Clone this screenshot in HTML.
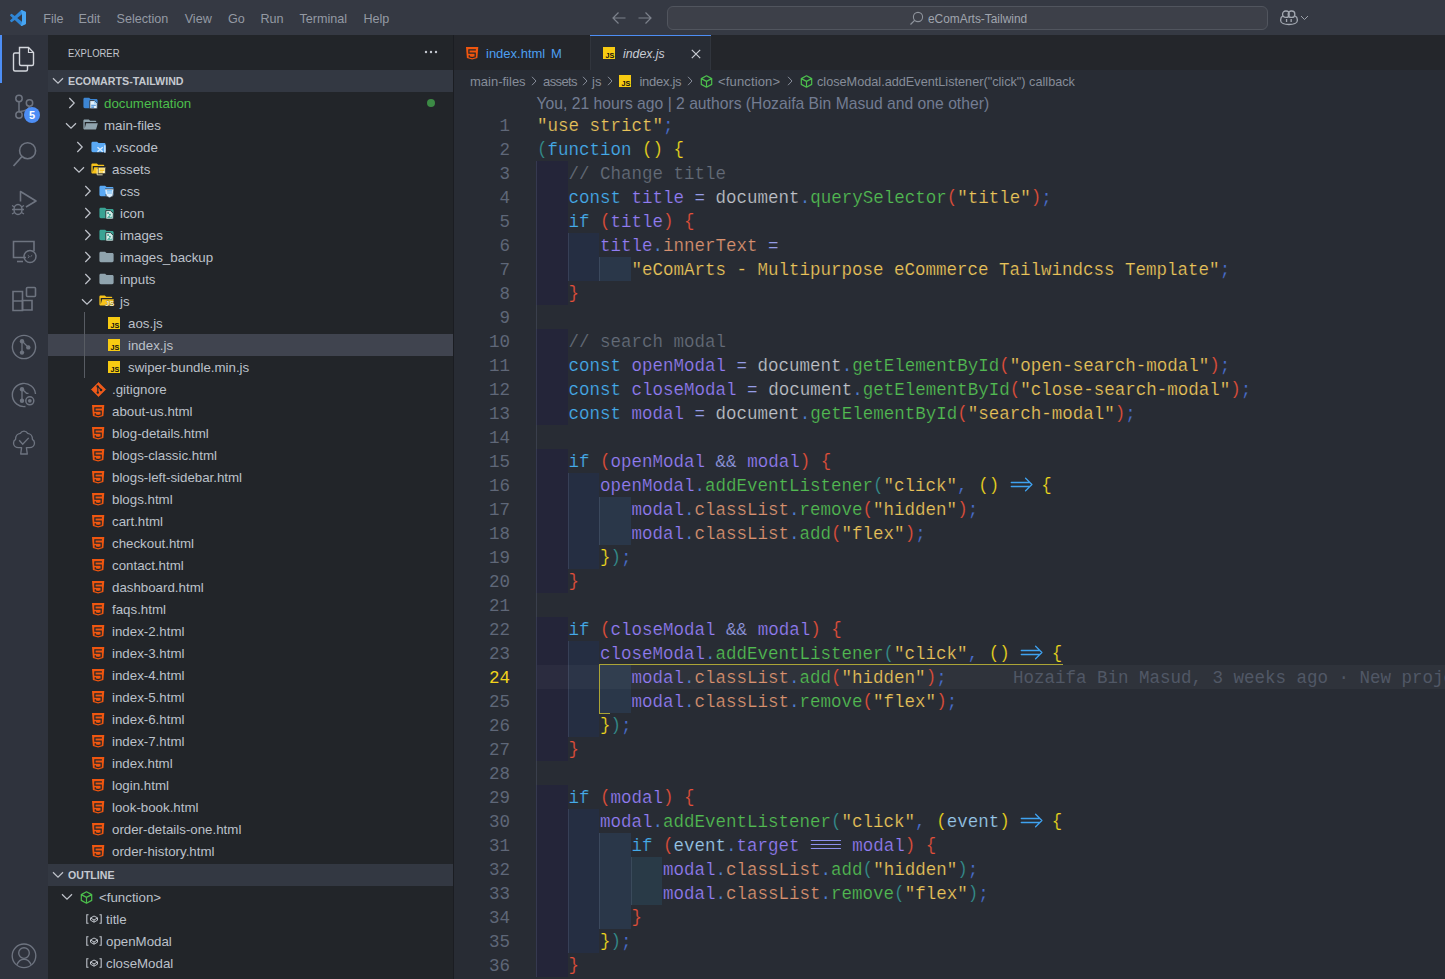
<!DOCTYPE html><html><head><meta charset="utf-8"><style>
*{box-sizing:border-box}
html,body{margin:0;padding:0;width:1445px;height:979px;overflow:hidden;background:#282c34}
body{position:relative;font-family:"Liberation Sans",sans-serif;}
.a{position:absolute}
.t{position:absolute;white-space:pre;line-height:22px;font-size:13px;color:#b9bec7}
svg{position:absolute;overflow:visible}
.code{position:absolute;left:537px;white-space:pre;-webkit-text-stroke:0.2px #282c34;font-family:"Liberation Mono",monospace;font-size:17.5px;line-height:24px;height:24px}
.ln{position:absolute;left:471px;width:39px;text-align:right;font-family:"Liberation Mono",monospace;font-size:17.5px;line-height:24px;color:#5f6778}
.kw{color:#45abea}.v{color:#927df3}.op{color:#959ce6}.doc{color:#bfc2c9}.dot{color:#4f80d6}
.fn{color:#52bb52}.pr{color:#d8916f}.s{color:#eac45a}.sc{color:#4a6fd0}.cm{color:#656c79}
.b1{color:#efd81e}.b2{color:#e4503a}.b0{color:#35908f}.par{color:#98c8ea}.b0,.b1,.b2{position:relative;top:-1px}
</style></head><body>
<div class="a" style="left:0;top:0;width:1445px;height:35px;background:#353943"></div><svg style="left:10px;top:10px" width="16" height="16" viewBox="0 0 100 100">
<path d="M96.46 10.8L75.86.87a6.23 6.23 0 0 0-7.1 1.2L29.55 37.87 12.47 24.9a4.16 4.16 0 0 0-5.32.24l-5.48 4.99a4.17 4.17 0 0 0 0 6.16L16.47 50 1.67 63.71a4.17 4.17 0 0 0 0 6.16l5.48 4.99a4.16 4.16 0 0 0 5.32.24l17.08-12.97 39.2 35.8a6.22 6.22 0 0 0 7.1 1.2l20.6-9.92A6.25 6.25 0 0 0 100 83.58V16.42a6.25 6.25 0 0 0-3.54-5.62zM75.01 72.7L45.28 50 75.01 27.3z" fill="#2f86d6"/>
<path d="M96.46 10.8L75.86.87a6.23 6.23 0 0 0-7.1 1.2L75 27.3V72.7L68.76 97.93a6.22 6.22 0 0 0 7.1 1.2l20.6-9.92A6.25 6.25 0 0 0 100 83.58V16.42a6.25 6.25 0 0 0-3.54-5.62z" fill="#47a5f2"/>
</svg><span class="t" style="left:43.3px;top:8px;font-size:12.6px;color:#9499a3">File</span><span class="t" style="left:78.6px;top:8px;font-size:12.6px;color:#9499a3">Edit</span><span class="t" style="left:116.5px;top:8px;font-size:12.6px;color:#9499a3">Selection</span><span class="t" style="left:184.7px;top:8px;font-size:12.6px;color:#9499a3">View</span><span class="t" style="left:228.0px;top:8px;font-size:12.6px;color:#9499a3">Go</span><span class="t" style="left:260.5px;top:8px;font-size:12.6px;color:#9499a3">Run</span><span class="t" style="left:299.4px;top:8px;font-size:12.6px;color:#9499a3">Terminal</span><span class="t" style="left:363.4px;top:8px;font-size:12.6px;color:#9499a3">Help</span><svg style="left:611px;top:11px" width="16" height="14" viewBox="0 0 16 14"><path d="M14.5 7H2M7.5 1.5L2 7l5.5 5.5" stroke="#7d828c" stroke-width="1.2" fill="none"/></svg><svg style="left:637px;top:11px" width="16" height="14" viewBox="0 0 16 14"><path d="M1.5 7H14M8.5 1.5L14 7l-5.5 5.5" stroke="#7d828c" stroke-width="1.2" fill="none"/></svg><div class="a" style="left:667px;top:6px;width:601px;height:24px;border:1px solid #51555e;border-radius:6px;background:#3d4049"></div><svg style="left:909px;top:11px" width="15" height="15" viewBox="0 0 15 15"><circle cx="9" cy="6" r="4.6" stroke="#8e939c" stroke-width="1.1" fill="none"/><path d="M5.6 9.4L1.5 13.5" stroke="#8e939c" stroke-width="1.2"/></svg><span class="t" style="left:928px;top:8px;font-size:11.9px;color:#a0a5ae">eComArts-Tailwind</span><svg style="left:1280px;top:10px" width="18" height="16" viewBox="0 0 18 16">
<rect x="2.6" y="1" width="6.6" height="6.4" rx="3" stroke="#a3a8b1" stroke-width="1.3" fill="none"/>
<rect x="8.2" y="1" width="6.6" height="6.4" rx="3" stroke="#a3a8b1" stroke-width="1.3" fill="none"/>
<path d="M2.8 6.2C1.5 6.8.7 8 .7 9.5v1.2c0 2.2 3.6 3.8 8.3 3.8s8.3-1.6 8.3-3.8V9.5c0-1.5-.8-2.7-2.1-3.3" stroke="#a3a8b1" stroke-width="1.3" fill="none"/>
<rect x="5.9" y="9" width="1.3" height="3" fill="#a3a8b1"/><rect x="10.5" y="9" width="1.3" height="3" fill="#a3a8b1"/>
</svg><svg style="left:1300px;top:15px" width="9" height="6" viewBox="0 0 9 6"><path d="M1 1l3.5 3.5L8 1" stroke="#9ca1aa" stroke-width="1" fill="none"/></svg><div class="a" style="left:0;top:35px;width:48px;height:944px;background:#2f333d"></div><div class="a" style="left:0;top:35px;width:2px;height:48px;background:#4d8ef5"></div><svg style="left:0;top:35px" width="48" height="48" viewBox="0 0 48 48">
<path d="M19.5 12.5h9l5 5V29a1.5 1.5 0 0 1-1.5 1.5H21a1.5 1.5 0 0 1-1.5-1.5z" stroke="#d4d7dd" stroke-width="1.4" fill="none"/>
<path d="M28.5 12.5v5h5" stroke="#d4d7dd" stroke-width="1.2" fill="none"/>
<path d="M19.5 18h-4.5a1.5 1.5 0 0 0-1.5 1.5V34.5a1.5 1.5 0 0 0 1.5 1.5h11a1.5 1.5 0 0 0 1.5-1.5V30.5" stroke="#d4d7dd" stroke-width="1.4" fill="none"/>
</svg><svg style="left:0;top:83px" width="48" height="48" viewBox="0 0 48 48">
<circle cx="19" cy="15.5" r="3.2" stroke="#6e7480" stroke-width="1.5" fill="none"/>
<circle cx="29.5" cy="20" r="3.2" stroke="#6e7480" stroke-width="1.5" fill="none"/>
<circle cx="19" cy="32" r="3.2" stroke="#6e7480" stroke-width="1.5" fill="none"/>
<path d="M19 18.7V28.8M29.5 23.2c0 3-3 4.5-10.5 5.6" stroke="#6e7480" stroke-width="1.5" fill="none"/>
<circle cx="32" cy="32" r="8" fill="#4d8ef5"/>
<text x="32" y="36.3" font-family="Liberation Sans" font-weight="bold" font-size="11" fill="#fff" text-anchor="middle">5</text>
</svg><svg style="left:0;top:131px" width="48" height="48" viewBox="0 0 48 48">
<circle cx="27.6" cy="19.7" r="8" stroke="#6e7480" stroke-width="1.6" fill="none"/>
<path d="M22 25.5L13.5 35" stroke="#6e7480" stroke-width="1.7" fill="none"/>
</svg><svg style="left:0;top:179px" width="48" height="48" viewBox="0 0 48 48">
<path d="M20.5 22.5V12.5L36 22l-10 6" stroke="#6e7480" stroke-width="1.6" fill="none" stroke-linejoin="round"/>
<ellipse cx="18" cy="30.5" rx="4" ry="5" stroke="#6e7480" stroke-width="1.5" fill="none"/>
<path d="M14 30.5h8M12 26.5l2.5 1.5M24 26.5l-2.5 1.5M12 35l2.5-1.5M24 35l-2.5-1.5M12 30.5h2M22 30.5h2" stroke="#6e7480" stroke-width="1.3" fill="none"/>
</svg><svg style="left:0;top:227px" width="48" height="48" viewBox="0 0 48 48">
<path d="M26 30.5H13.5V14.5h20.5V24" stroke="#6e7480" stroke-width="1.6" fill="none"/>
<path d="M17 34.5h6" stroke="#6e7480" stroke-width="1.6"/>
<circle cx="30" cy="29.5" r="6" stroke="#6e7480" stroke-width="1.5" fill="none"/>
<path d="M27.8 28.3l1.6 1.3-1.6 1.3M32.2 28.3l-1.6 1.3" stroke="#6e7480" stroke-width="1" fill="none"/>
</svg><svg style="left:0;top:275px" width="48" height="48" viewBox="0 0 48 48">
<path d="M13 23h9.5v9.5H13zM13 32.5h9.5V42H13z" transform="translate(0,-6.5)" stroke="#6e7480" stroke-width="1.6" fill="none"/>
<path d="M22.5 26h9.5v9.5h-9.5z" transform="translate(0,-0.5)" stroke="#6e7480" stroke-width="1.6" fill="none"/>
<rect x="26.5" y="12.5" width="9" height="9" rx="1" stroke="#6e7480" stroke-width="1.6" fill="none"/>
</svg><svg style="left:0;top:323px" width="48" height="48" viewBox="0 0 48 48">
<circle cx="24" cy="24" r="11.6" stroke="#6e7480" stroke-width="1.4" fill="none"/>
<circle cx="22" cy="18.2" r="2.2" fill="#6e7480"/><circle cx="28.3" cy="24.4" r="2.2" fill="#6e7480"/><circle cx="22" cy="29.6" r="2.2" fill="#6e7480"/>
<path d="M22 18V30M22 18l6.3 6.4" stroke="#6e7480" stroke-width="1.3" fill="none"/>
</svg><svg style="left:0;top:371px" width="48" height="48" viewBox="0 0 48 48">
<path d="M25.5 35.5A11.6 11.6 0 1 1 35.5 23" stroke="#6e7480" stroke-width="1.4" fill="none"/>
<circle cx="22" cy="18.2" r="2.2" fill="#6e7480"/><circle cx="22" cy="29.8" r="2.2" fill="#6e7480"/>
<path d="M22 18V30M22 18l4.5 4.3h2" stroke="#6e7480" stroke-width="1.3" fill="none"/>
<circle cx="29.8" cy="29.8" r="4" stroke="#6e7480" stroke-width="1.5" fill="none"/>
<circle cx="29.8" cy="29.8" r="1.9" fill="#6e7480"/>
</svg><svg style="left:0;top:419px" width="48" height="48" viewBox="0 0 48 48">
<path d="M21.6 28.6H18.6C15.6 28.6 13.5 26.5 13.5 24C13.5 22.3 14.4 21 15.6 20.3C15.4 17 17.6 14.6 20.3 14.3C21.1 12.9 22.4 12.1 24 12.1S26.9 12.9 27.7 14.3C30.4 14.6 32.6 17 32.4 20.3C33.6 21 34.5 22.3 34.5 24C34.5 26.5 32.4 28.6 29.4 28.6H26.4L27.3 35H20.7z" stroke="#6e7480" stroke-width="1.35" fill="none" stroke-linejoin="round"/>
<path d="M19.2 21.3l3.5 3.9 6-6.3" stroke="#6e7480" stroke-width="1.35" fill="none"/>
</svg><svg style="left:0;top:932px" width="48" height="48" viewBox="0 0 48 48">
<circle cx="24" cy="23.8" r="11.8" stroke="#6e7480" stroke-width="1.35" fill="none"/>
<circle cx="24" cy="21" r="5.3" stroke="#6e7480" stroke-width="1.35" fill="none"/>
<path d="M16.8 32.8c1.5-3.6 4-5.6 7.2-5.6s5.7 2 7.2 5.6" stroke="#6e7480" stroke-width="1.35" fill="none"/>
</svg><div class="a" style="left:48px;top:35px;width:405px;height:944px;background:#222529"></div><div class="a" style="left:453px;top:35px;width:1px;height:944px;background:#1b1d22"></div><span class="t" style="left:68px;top:42px;font-size:11.2px;color:#c2c6cd;transform:scaleX(0.845);transform-origin:0 0">EXPLORER</span><svg style="left:424px;top:50px" width="14" height="4" viewBox="0 0 14 4"><circle cx="2" cy="2" r="1.2" fill="#c5c9d0"/><circle cx="7" cy="2" r="1.2" fill="#c5c9d0"/><circle cx="12" cy="2" r="1.2" fill="#c5c9d0"/></svg><div class="a" style="left:48px;top:70px;width:405px;height:22px;background:#333842"></div><svg style="left:52.0px;top:77.0px" width="12" height="8" viewBox="0 0 12 8"><path d="M1 1.3l5 4.9 5-4.9" stroke="#c0c4cb" stroke-width="1.2" fill="none"/></svg><span class="t" style="left:68px;top:70px;font-size:10.7px;font-weight:bold;color:#c5c9d0">ECOMARTS-TAILWIND</span><svg style="left:67.5px;top:97.0px" width="8" height="12" viewBox="0 0 8 12"><path d="M1.3 1l4.9 5-4.9 5" stroke="#c0c4cb" stroke-width="1.2" fill="none"/></svg><svg style="left:81.58px;top:95.38px" width="17.04" height="15.75" viewBox="0 0 24 24" preserveAspectRatio="none"><path d="M10 4H4c-1.1 0-2 .9-2 2v12c0 1.1.9 2 2 2h16c1.1 0 2-.9 2-2V8c0-1.1-.9-2-2-2h-8l-2-2z" fill="#3d86d4"/><path d="M11 8.5h6.5l4 4v8.5H11z" fill="#e3f2fd" stroke="#21252b" stroke-width="1.2"/><path d="M17 8.5v4.5h4.5" fill="#90caf9"/><path d="M13 15.5h6.5M13 18.5h4" stroke="#3d86d4" stroke-width="1.6"/></svg><span class="t" style="left:104px;top:93px;font-size:13.3px;color:#4cbf4c">documentation</span><svg style="left:65.2px;top:121.5px" width="12" height="8" viewBox="0 0 12 8"><path d="M1 1.3l5 4.9 5-4.9" stroke="#c0c4cb" stroke-width="1.2" fill="none"/></svg><svg style="left:81.63px;top:117.48px" width="16.4" height="15.1" viewBox="0 0 24 24" preserveAspectRatio="none"><path d="M19 20H4c-1.1 0-2-.9-2-2V6c0-1.1.9-2 2-2h6l2 2h7c1.1 0 2 .9 2 2H4v10l2.14-8h17.07l-2.28 8.5c-.23.87-1.01 1.5-1.93 1.5z" fill="#90a4ae"/></svg><span class="t" style="left:104px;top:115px;font-size:13.3px;color:#bcc1c9">main-files</span><svg style="left:75.5px;top:141.0px" width="8" height="12" viewBox="0 0 8 12"><path d="M1.3 1l4.9 5-4.9 5" stroke="#c0c4cb" stroke-width="1.2" fill="none"/></svg><svg style="left:89.58px;top:139.38px" width="17.04" height="15.75" viewBox="0 0 24 24" preserveAspectRatio="none"><path d="M10 4H4c-1.1 0-2 .9-2 2v12c0 1.1.9 2 2 2h16c1.1 0 2-.9 2-2V8c0-1.1-.9-2-2-2h-8l-2-2z" fill="#5aa9f4"/><path d="M21.5 9v12.5l-3 1.5-7-6.5-3 2.3-1.3-.7V13l1.3-.7 3 2.3 7-6.5z" fill="#21252b" opacity="0"/><path d="M21 9.5v11.5M10.5 12.5l7.5 7M10.5 19.5l7.5-7" stroke="#d6ecff" stroke-width="2" fill="none"/></svg><span class="t" style="left:112px;top:137px;font-size:13.3px;color:#bcc1c9">.vscode</span><svg style="left:73.2px;top:165.5px" width="12" height="8" viewBox="0 0 12 8"><path d="M1 1.3l5 4.9 5-4.9" stroke="#c0c4cb" stroke-width="1.2" fill="none"/></svg><svg style="left:89.63px;top:161.48px" width="16.4" height="15.1" viewBox="0 0 24 24" preserveAspectRatio="none"><path d="M19 20H4c-1.1 0-2-.9-2-2V6c0-1.1.9-2 2-2h6l2 2h7c1.1 0 2 .9 2 2H4v10l2.14-8h17.07l-2.28 8.5c-.23.87-1.01 1.5-1.93 1.5z" fill="#f7c31a"/><path d="M12 10h10.5v10H12z" fill="#fff6c2" stroke="#21252b" stroke-width="1"/><path d="M14 12.8h7M14 15.2h7M14 17.6h5" stroke="#f5b800" stroke-width="1.3"/><path d="M10.5 13v9h8" stroke="#fff6c2" stroke-width="1.3" fill="none"/></svg><span class="t" style="left:112px;top:159px;font-size:13.3px;color:#bcc1c9">assets</span><svg style="left:83.5px;top:185.0px" width="8" height="12" viewBox="0 0 8 12"><path d="M1.3 1l4.9 5-4.9 5" stroke="#c0c4cb" stroke-width="1.2" fill="none"/></svg><svg style="left:97.58px;top:183.38px" width="17.04" height="15.75" viewBox="0 0 24 24" preserveAspectRatio="none"><path d="M10 4H4c-1.1 0-2 .9-2 2v12c0 1.1.9 2 2 2h16c1.1 0 2-.9 2-2V8c0-1.1-.9-2-2-2h-8l-2-2z" fill="#5aa9f4"/><path d="M10 9h12.5l-1.5 11-4.7 2.5-4.8-2.5-.4-3" fill="#d8ecfd" stroke="#21252b" stroke-width="1"/><path d="M12.5 12h7.5M13 15.2h6.6" stroke="#64b5f6" stroke-width="1.8"/></svg><span class="t" style="left:120px;top:181px;font-size:13.3px;color:#bcc1c9">css</span><svg style="left:83.5px;top:207.0px" width="8" height="12" viewBox="0 0 8 12"><path d="M1.3 1l4.9 5-4.9 5" stroke="#c0c4cb" stroke-width="1.2" fill="none"/></svg><svg style="left:97.58px;top:205.38px" width="17.04" height="15.75" viewBox="0 0 24 24" preserveAspectRatio="none"><path d="M10 4H4c-1.1 0-2 .9-2 2v12c0 1.1.9 2 2 2h16c1.1 0 2-.9 2-2V8c0-1.1-.9-2-2-2h-8l-2-2z" fill="#3aa394"/><path d="M11 8.5h6.5l4 4v9H11z" fill="#d4efe9" stroke="#21252b" stroke-width="1.2"/><path d="M12.5 19.5l3-3 2.5 2 2-1.5v2.5z" fill="#3aa394"/><rect x="13" y="11" width="2.5" height="2.5" fill="#3aa394"/><rect x="15.5" y="13.5" width="2.5" height="2.5" fill="#3aa394"/></svg><span class="t" style="left:120px;top:203px;font-size:13.3px;color:#bcc1c9">icon</span><svg style="left:83.5px;top:229.0px" width="8" height="12" viewBox="0 0 8 12"><path d="M1.3 1l4.9 5-4.9 5" stroke="#c0c4cb" stroke-width="1.2" fill="none"/></svg><svg style="left:97.58px;top:227.38px" width="17.04" height="15.75" viewBox="0 0 24 24" preserveAspectRatio="none"><path d="M10 4H4c-1.1 0-2 .9-2 2v12c0 1.1.9 2 2 2h16c1.1 0 2-.9 2-2V8c0-1.1-.9-2-2-2h-8l-2-2z" fill="#3aa394"/><path d="M11 8.5h6.5l4 4v9H11z" fill="#d4efe9" stroke="#21252b" stroke-width="1.2"/><path d="M12.5 19.5l3-3 2.5 2 2-1.5v2.5z" fill="#3aa394"/><rect x="13" y="11" width="2.5" height="2.5" fill="#3aa394"/><rect x="15.5" y="13.5" width="2.5" height="2.5" fill="#3aa394"/></svg><span class="t" style="left:120px;top:225px;font-size:13.3px;color:#bcc1c9">images</span><svg style="left:83.5px;top:251.0px" width="8" height="12" viewBox="0 0 8 12"><path d="M1.3 1l4.9 5-4.9 5" stroke="#c0c4cb" stroke-width="1.2" fill="none"/></svg><svg style="left:97.58px;top:249.38px" width="17.04" height="15.75" viewBox="0 0 24 24" preserveAspectRatio="none"><path d="M10 4H4c-1.1 0-2 .9-2 2v12c0 1.1.9 2 2 2h16c1.1 0 2-.9 2-2V8c0-1.1-.9-2-2-2h-8l-2-2z" fill="#90a4ae"/></svg><span class="t" style="left:120px;top:247px;font-size:13.3px;color:#bcc1c9">images_backup</span><svg style="left:83.5px;top:273.0px" width="8" height="12" viewBox="0 0 8 12"><path d="M1.3 1l4.9 5-4.9 5" stroke="#c0c4cb" stroke-width="1.2" fill="none"/></svg><svg style="left:97.58px;top:271.38px" width="17.04" height="15.75" viewBox="0 0 24 24" preserveAspectRatio="none"><path d="M10 4H4c-1.1 0-2 .9-2 2v12c0 1.1.9 2 2 2h16c1.1 0 2-.9 2-2V8c0-1.1-.9-2-2-2h-8l-2-2z" fill="#90a4ae"/></svg><span class="t" style="left:120px;top:269px;font-size:13.3px;color:#bcc1c9">inputs</span><svg style="left:81.2px;top:297.5px" width="12" height="8" viewBox="0 0 12 8"><path d="M1 1.3l5 4.9 5-4.9" stroke="#c0c4cb" stroke-width="1.2" fill="none"/></svg><svg style="left:97.63px;top:293.48px" width="16.4" height="15.1" viewBox="0 0 24 24" preserveAspectRatio="none"><path d="M19 20H4c-1.1 0-2-.9-2-2V6c0-1.1.9-2 2-2h6l2 2h7c1.1 0 2 .9 2 2H4v10l2.14-8h17.07l-2.28 8.5c-.23.87-1.01 1.5-1.93 1.5z" fill="#f7c31a"/><text x="10.3" y="21.3" font-family="Liberation Sans" font-weight="bold" font-size="11" fill="#fff4c0" stroke="#21252b" stroke-width="0.6" paint-order="stroke">JS</text></svg><span class="t" style="left:120px;top:291px;font-size:13.3px;color:#bcc1c9">js</span><svg style="left:108.0px;top:317.0px" width="12" height="12" viewBox="0 0 12 12"><rect width="12" height="12" fill="#f7cb12"/><text x="11.3" y="11.3" font-family="Liberation Sans" font-weight="bold" font-size="7.2" fill="#111" text-anchor="end">JS</text></svg><span class="t" style="left:128px;top:313px;font-size:13.3px;color:#bcc1c9">aos.js</span><div class="a" style="left:48px;top:334px;width:405px;height:22px;background:#40444f"></div><svg style="left:108.0px;top:339.0px" width="12" height="12" viewBox="0 0 12 12"><rect width="12" height="12" fill="#f7cb12"/><text x="11.3" y="11.3" font-family="Liberation Sans" font-weight="bold" font-size="7.2" fill="#111" text-anchor="end">JS</text></svg><span class="t" style="left:128px;top:335px;font-size:13.3px;color:#bcc1c9">index.js</span><svg style="left:108.0px;top:361.0px" width="12" height="12" viewBox="0 0 12 12"><rect width="12" height="12" fill="#f7cb12"/><text x="11.3" y="11.3" font-family="Liberation Sans" font-weight="bold" font-size="7.2" fill="#111" text-anchor="end">JS</text></svg><span class="t" style="left:128px;top:357px;font-size:13.3px;color:#bcc1c9">swiper-bundle.min.js</span><svg style="left:90.5px;top:382.0px" width="15" height="15" viewBox="0 0 15 15"><path d="M7.5 0.4L14.6 7.5 7.5 14.6 0.4 7.5z" fill="#ee5a1a" stroke="#ee5a1a" stroke-width="0.8" stroke-linejoin="round"/><path d="M5.8 3.5l4.2 4.2M6.8 4.5V11" stroke="#21252b" stroke-width="1.1"/><circle cx="6.8" cy="4.6" r="1.2" fill="#21252b"/><circle cx="6.8" cy="10.6" r="1.2" fill="#21252b"/><circle cx="10" cy="8" r="1.3" fill="#21252b"/></svg><span class="t" style="left:112px;top:379px;font-size:13.3px;color:#bcc1c9">.gitignore</span><svg style="left:91.9px;top:404.8px" width="12.4" height="12.4" viewBox="0 0 12.4 12.4"><path d="M0 0h12.3l-.9 10.9-5.25 1.5-5.25-1.5z" fill="#f0560f"/><path d="M9.9 2.9H2.9v3.3h6.3v3.6l-3.05.9-2.9-.9V8.3" stroke="#21252b" stroke-width="1.25" fill="none"/></svg><span class="t" style="left:112px;top:401px;font-size:13.3px;color:#bcc1c9">about-us.html</span><svg style="left:91.9px;top:426.8px" width="12.4" height="12.4" viewBox="0 0 12.4 12.4"><path d="M0 0h12.3l-.9 10.9-5.25 1.5-5.25-1.5z" fill="#f0560f"/><path d="M9.9 2.9H2.9v3.3h6.3v3.6l-3.05.9-2.9-.9V8.3" stroke="#21252b" stroke-width="1.25" fill="none"/></svg><span class="t" style="left:112px;top:423px;font-size:13.3px;color:#bcc1c9">blog-details.html</span><svg style="left:91.9px;top:448.8px" width="12.4" height="12.4" viewBox="0 0 12.4 12.4"><path d="M0 0h12.3l-.9 10.9-5.25 1.5-5.25-1.5z" fill="#f0560f"/><path d="M9.9 2.9H2.9v3.3h6.3v3.6l-3.05.9-2.9-.9V8.3" stroke="#21252b" stroke-width="1.25" fill="none"/></svg><span class="t" style="left:112px;top:445px;font-size:13.3px;color:#bcc1c9">blogs-classic.html</span><svg style="left:91.9px;top:470.8px" width="12.4" height="12.4" viewBox="0 0 12.4 12.4"><path d="M0 0h12.3l-.9 10.9-5.25 1.5-5.25-1.5z" fill="#f0560f"/><path d="M9.9 2.9H2.9v3.3h6.3v3.6l-3.05.9-2.9-.9V8.3" stroke="#21252b" stroke-width="1.25" fill="none"/></svg><span class="t" style="left:112px;top:467px;font-size:13.3px;color:#bcc1c9">blogs-left-sidebar.html</span><svg style="left:91.9px;top:492.8px" width="12.4" height="12.4" viewBox="0 0 12.4 12.4"><path d="M0 0h12.3l-.9 10.9-5.25 1.5-5.25-1.5z" fill="#f0560f"/><path d="M9.9 2.9H2.9v3.3h6.3v3.6l-3.05.9-2.9-.9V8.3" stroke="#21252b" stroke-width="1.25" fill="none"/></svg><span class="t" style="left:112px;top:489px;font-size:13.3px;color:#bcc1c9">blogs.html</span><svg style="left:91.9px;top:514.8px" width="12.4" height="12.4" viewBox="0 0 12.4 12.4"><path d="M0 0h12.3l-.9 10.9-5.25 1.5-5.25-1.5z" fill="#f0560f"/><path d="M9.9 2.9H2.9v3.3h6.3v3.6l-3.05.9-2.9-.9V8.3" stroke="#21252b" stroke-width="1.25" fill="none"/></svg><span class="t" style="left:112px;top:511px;font-size:13.3px;color:#bcc1c9">cart.html</span><svg style="left:91.9px;top:536.8px" width="12.4" height="12.4" viewBox="0 0 12.4 12.4"><path d="M0 0h12.3l-.9 10.9-5.25 1.5-5.25-1.5z" fill="#f0560f"/><path d="M9.9 2.9H2.9v3.3h6.3v3.6l-3.05.9-2.9-.9V8.3" stroke="#21252b" stroke-width="1.25" fill="none"/></svg><span class="t" style="left:112px;top:533px;font-size:13.3px;color:#bcc1c9">checkout.html</span><svg style="left:91.9px;top:558.8px" width="12.4" height="12.4" viewBox="0 0 12.4 12.4"><path d="M0 0h12.3l-.9 10.9-5.25 1.5-5.25-1.5z" fill="#f0560f"/><path d="M9.9 2.9H2.9v3.3h6.3v3.6l-3.05.9-2.9-.9V8.3" stroke="#21252b" stroke-width="1.25" fill="none"/></svg><span class="t" style="left:112px;top:555px;font-size:13.3px;color:#bcc1c9">contact.html</span><svg style="left:91.9px;top:580.8px" width="12.4" height="12.4" viewBox="0 0 12.4 12.4"><path d="M0 0h12.3l-.9 10.9-5.25 1.5-5.25-1.5z" fill="#f0560f"/><path d="M9.9 2.9H2.9v3.3h6.3v3.6l-3.05.9-2.9-.9V8.3" stroke="#21252b" stroke-width="1.25" fill="none"/></svg><span class="t" style="left:112px;top:577px;font-size:13.3px;color:#bcc1c9">dashboard.html</span><svg style="left:91.9px;top:602.8px" width="12.4" height="12.4" viewBox="0 0 12.4 12.4"><path d="M0 0h12.3l-.9 10.9-5.25 1.5-5.25-1.5z" fill="#f0560f"/><path d="M9.9 2.9H2.9v3.3h6.3v3.6l-3.05.9-2.9-.9V8.3" stroke="#21252b" stroke-width="1.25" fill="none"/></svg><span class="t" style="left:112px;top:599px;font-size:13.3px;color:#bcc1c9">faqs.html</span><svg style="left:91.9px;top:624.8px" width="12.4" height="12.4" viewBox="0 0 12.4 12.4"><path d="M0 0h12.3l-.9 10.9-5.25 1.5-5.25-1.5z" fill="#f0560f"/><path d="M9.9 2.9H2.9v3.3h6.3v3.6l-3.05.9-2.9-.9V8.3" stroke="#21252b" stroke-width="1.25" fill="none"/></svg><span class="t" style="left:112px;top:621px;font-size:13.3px;color:#bcc1c9">index-2.html</span><svg style="left:91.9px;top:646.8px" width="12.4" height="12.4" viewBox="0 0 12.4 12.4"><path d="M0 0h12.3l-.9 10.9-5.25 1.5-5.25-1.5z" fill="#f0560f"/><path d="M9.9 2.9H2.9v3.3h6.3v3.6l-3.05.9-2.9-.9V8.3" stroke="#21252b" stroke-width="1.25" fill="none"/></svg><span class="t" style="left:112px;top:643px;font-size:13.3px;color:#bcc1c9">index-3.html</span><svg style="left:91.9px;top:668.8px" width="12.4" height="12.4" viewBox="0 0 12.4 12.4"><path d="M0 0h12.3l-.9 10.9-5.25 1.5-5.25-1.5z" fill="#f0560f"/><path d="M9.9 2.9H2.9v3.3h6.3v3.6l-3.05.9-2.9-.9V8.3" stroke="#21252b" stroke-width="1.25" fill="none"/></svg><span class="t" style="left:112px;top:665px;font-size:13.3px;color:#bcc1c9">index-4.html</span><svg style="left:91.9px;top:690.8px" width="12.4" height="12.4" viewBox="0 0 12.4 12.4"><path d="M0 0h12.3l-.9 10.9-5.25 1.5-5.25-1.5z" fill="#f0560f"/><path d="M9.9 2.9H2.9v3.3h6.3v3.6l-3.05.9-2.9-.9V8.3" stroke="#21252b" stroke-width="1.25" fill="none"/></svg><span class="t" style="left:112px;top:687px;font-size:13.3px;color:#bcc1c9">index-5.html</span><svg style="left:91.9px;top:712.8px" width="12.4" height="12.4" viewBox="0 0 12.4 12.4"><path d="M0 0h12.3l-.9 10.9-5.25 1.5-5.25-1.5z" fill="#f0560f"/><path d="M9.9 2.9H2.9v3.3h6.3v3.6l-3.05.9-2.9-.9V8.3" stroke="#21252b" stroke-width="1.25" fill="none"/></svg><span class="t" style="left:112px;top:709px;font-size:13.3px;color:#bcc1c9">index-6.html</span><svg style="left:91.9px;top:734.8px" width="12.4" height="12.4" viewBox="0 0 12.4 12.4"><path d="M0 0h12.3l-.9 10.9-5.25 1.5-5.25-1.5z" fill="#f0560f"/><path d="M9.9 2.9H2.9v3.3h6.3v3.6l-3.05.9-2.9-.9V8.3" stroke="#21252b" stroke-width="1.25" fill="none"/></svg><span class="t" style="left:112px;top:731px;font-size:13.3px;color:#bcc1c9">index-7.html</span><svg style="left:91.9px;top:756.8px" width="12.4" height="12.4" viewBox="0 0 12.4 12.4"><path d="M0 0h12.3l-.9 10.9-5.25 1.5-5.25-1.5z" fill="#f0560f"/><path d="M9.9 2.9H2.9v3.3h6.3v3.6l-3.05.9-2.9-.9V8.3" stroke="#21252b" stroke-width="1.25" fill="none"/></svg><span class="t" style="left:112px;top:753px;font-size:13.3px;color:#bcc1c9">index.html</span><svg style="left:91.9px;top:778.8px" width="12.4" height="12.4" viewBox="0 0 12.4 12.4"><path d="M0 0h12.3l-.9 10.9-5.25 1.5-5.25-1.5z" fill="#f0560f"/><path d="M9.9 2.9H2.9v3.3h6.3v3.6l-3.05.9-2.9-.9V8.3" stroke="#21252b" stroke-width="1.25" fill="none"/></svg><span class="t" style="left:112px;top:775px;font-size:13.3px;color:#bcc1c9">login.html</span><svg style="left:91.9px;top:800.8px" width="12.4" height="12.4" viewBox="0 0 12.4 12.4"><path d="M0 0h12.3l-.9 10.9-5.25 1.5-5.25-1.5z" fill="#f0560f"/><path d="M9.9 2.9H2.9v3.3h6.3v3.6l-3.05.9-2.9-.9V8.3" stroke="#21252b" stroke-width="1.25" fill="none"/></svg><span class="t" style="left:112px;top:797px;font-size:13.3px;color:#bcc1c9">look-book.html</span><svg style="left:91.9px;top:822.8px" width="12.4" height="12.4" viewBox="0 0 12.4 12.4"><path d="M0 0h12.3l-.9 10.9-5.25 1.5-5.25-1.5z" fill="#f0560f"/><path d="M9.9 2.9H2.9v3.3h6.3v3.6l-3.05.9-2.9-.9V8.3" stroke="#21252b" stroke-width="1.25" fill="none"/></svg><span class="t" style="left:112px;top:819px;font-size:13.3px;color:#bcc1c9">order-details-one.html</span><svg style="left:91.9px;top:844.8px" width="12.4" height="12.4" viewBox="0 0 12.4 12.4"><path d="M0 0h12.3l-.9 10.9-5.25 1.5-5.25-1.5z" fill="#f0560f"/><path d="M9.9 2.9H2.9v3.3h6.3v3.6l-3.05.9-2.9-.9V8.3" stroke="#21252b" stroke-width="1.25" fill="none"/></svg><span class="t" style="left:112px;top:841px;font-size:13.3px;color:#bcc1c9">order-history.html</span><div class="a" style="left:427px;top:99px;width:8px;height:8px;border-radius:50%;background:#3c8a45"></div><div class="a" style="left:84px;top:312px;width:1px;height:66px;background:#585c63"></div><div class="a" style="left:48px;top:864px;width:405px;height:22px;background:#333842"></div><svg style="left:52.0px;top:871.0px" width="12" height="8" viewBox="0 0 12 8"><path d="M1 1.3l5 4.9 5-4.9" stroke="#c0c4cb" stroke-width="1.2" fill="none"/></svg><span class="t" style="left:68px;top:864px;font-size:10.6px;font-weight:bold;color:#c5c9d0">OUTLINE</span><svg style="left:61.0px;top:893.0px" width="12" height="8" viewBox="0 0 12 8"><path d="M1 1.3l5 4.9 5-4.9" stroke="#c0c4cb" stroke-width="1.2" fill="none"/></svg><svg style="left:79.5px;top:891.0px" width="13" height="13" viewBox="0 0 13 13"><path d="M6.5 0.8l5.2 2.8v5.8l-5.2 2.8-5.2-2.8V3.6z M1.3 3.6l5.2 2.8 5.2-2.8 M6.5 6.4v5.8" stroke="#4cbf4c" stroke-width="1.2" fill="none" stroke-linejoin="round"/></svg><span class="t" style="left:99px;top:887px;font-size:13.3px;color:#bcc1c9">&lt;function&gt;</span><svg style="left:86.0px;top:914.0px" width="16" height="10" viewBox="0 0 16 10"><path d="M2.5 0.8H0.8v8.4h1.7M13.5 0.8h1.7v8.4h-1.7" stroke="#c0c4cb" stroke-width="1.1" fill="none"/><path d="M4.5 4l3.5-2 3.5 1.8v2.4L8 8.2 4.5 6.2z M4.5 4l3.5 2 3.5-2M8 6v2.2" stroke="#c0c4cb" stroke-width="1" fill="none"/></svg><span class="t" style="left:106px;top:909px;font-size:13.3px;color:#bcc1c9">title</span><svg style="left:86.0px;top:936.0px" width="16" height="10" viewBox="0 0 16 10"><path d="M2.5 0.8H0.8v8.4h1.7M13.5 0.8h1.7v8.4h-1.7" stroke="#c0c4cb" stroke-width="1.1" fill="none"/><path d="M4.5 4l3.5-2 3.5 1.8v2.4L8 8.2 4.5 6.2z M4.5 4l3.5 2 3.5-2M8 6v2.2" stroke="#c0c4cb" stroke-width="1" fill="none"/></svg><span class="t" style="left:106px;top:931px;font-size:13.3px;color:#bcc1c9">openModal</span><svg style="left:86.0px;top:958.0px" width="16" height="10" viewBox="0 0 16 10"><path d="M2.5 0.8H0.8v8.4h1.7M13.5 0.8h1.7v8.4h-1.7" stroke="#c0c4cb" stroke-width="1.1" fill="none"/><path d="M4.5 4l3.5-2 3.5 1.8v2.4L8 8.2 4.5 6.2z M4.5 4l3.5 2 3.5-2M8 6v2.2" stroke="#c0c4cb" stroke-width="1" fill="none"/></svg><span class="t" style="left:106px;top:953px;font-size:13.3px;color:#bcc1c9">closeModal</span><div class="a" style="left:454px;top:35px;width:991px;height:35px;background:#24262b"></div><svg style="left:466.0px;top:46.5px" width="12.4" height="12.4" viewBox="0 0 12.4 12.4"><path d="M0 0h12.3l-.9 10.9-5.25 1.5-5.25-1.5z" fill="#f0560f"/><path d="M9.9 2.9H2.9v3.3h6.3v3.6l-3.05.9-2.9-.9V8.3" stroke="#21252b" stroke-width="1.25" fill="none"/></svg><span class="t" style="left:486px;top:43px;font-size:13px;color:#4d9ff0">index.html</span><span class="t" style="left:551px;top:43px;font-size:13px;color:#4d9ff0">M</span><div class="a" style="left:590px;top:35px;width:121px;height:35px;background:#282c34;border-left:1px solid #31353d;border-right:1px solid #31353d"></div><div class="a" style="left:590px;top:35px;width:121px;height:1px;background:#4d8ef5"></div><svg style="left:603.0px;top:47.0px" width="12" height="12" viewBox="0 0 12 12"><rect width="12" height="12" fill="#f7cb12"/><text x="11.3" y="11.3" font-family="Liberation Sans" font-weight="bold" font-size="7.2" fill="#111" text-anchor="end">JS</text></svg><span class="t" style="left:623px;top:43px;font-size:12.3px;font-style:italic;color:#c9cdd4">index.js</span><svg style="left:691px;top:48.5px" width="10" height="10" viewBox="0 0 10 10"><path d="M0.8 0.8l8.4 8.4M9.2 0.8L0.8 9.2" stroke="#c9cdd4" stroke-width="1.2"/></svg><span class="t" style="left:470px;top:71px;color:#868c99">main-files</span><svg style="left:531.0px;top:76px" width="6" height="10" viewBox="0 0 6 10"><path d="M1 0.8l4 4.2-4 4.2" stroke="#868c99" stroke-width="1" fill="none"/></svg><span class="t" style="left:543px;top:71px;letter-spacing:-0.6px;color:#868c99">assets</span><svg style="left:582.0px;top:76px" width="6" height="10" viewBox="0 0 6 10"><path d="M1 0.8l4 4.2-4 4.2" stroke="#868c99" stroke-width="1" fill="none"/></svg><span class="t" style="left:592px;top:71px;color:#868c99">js</span><svg style="left:607.0px;top:76px" width="6" height="10" viewBox="0 0 6 10"><path d="M1 0.8l4 4.2-4 4.2" stroke="#868c99" stroke-width="1" fill="none"/></svg><svg style="left:619.0px;top:75.0px" width="12" height="12" viewBox="0 0 12 12"><rect width="12" height="12" fill="#f7cb12"/><text x="11.3" y="11.3" font-family="Liberation Sans" font-weight="bold" font-size="7.2" fill="#111" text-anchor="end">JS</text></svg><span class="t" style="left:639.5px;top:71px;letter-spacing:-0.28px;color:#868c99">index.js</span><svg style="left:687.0px;top:76px" width="6" height="10" viewBox="0 0 6 10"><path d="M1 0.8l4 4.2-4 4.2" stroke="#868c99" stroke-width="1" fill="none"/></svg><svg style="left:699.5px;top:74.5px" width="13" height="13" viewBox="0 0 13 13"><path d="M6.5 0.8l5.2 2.8v5.8l-5.2 2.8-5.2-2.8V3.6z M1.3 3.6l5.2 2.8 5.2-2.8 M6.5 6.4v5.8" stroke="#4cbf4c" stroke-width="1.2" fill="none" stroke-linejoin="round"/></svg><span class="t" style="left:718px;top:71px;letter-spacing:0.15px;color:#868c99">&lt;function&gt;</span><svg style="left:787.0px;top:76px" width="6" height="10" viewBox="0 0 6 10"><path d="M1 0.8l4 4.2-4 4.2" stroke="#868c99" stroke-width="1" fill="none"/></svg><svg style="left:800.0px;top:74.5px" width="13" height="13" viewBox="0 0 13 13"><path d="M6.5 0.8l5.2 2.8v5.8l-5.2 2.8-5.2-2.8V3.6z M1.3 3.6l5.2 2.8 5.2-2.8 M6.5 6.4v5.8" stroke="#4cbf4c" stroke-width="1.2" fill="none" stroke-linejoin="round"/></svg><span class="t" style="left:817px;top:71px;font-size:12.7px;color:#868c99">closeModal.addEventListener("click") callback</span><span class="t" style="left:536.5px;top:93px;font-size:15.7px;line-height:22px;color:#737c92">You, 21 hours ago | 2 authors (Hozaifa Bin Masud and one other)</span><div class="a" style="left:536px;top:161px;width:32px;height:24px;background:#242539"></div><div class="a" style="left:536px;top:161px;width:1px;height:24px;background:rgba(130,140,175,0.2)"></div><div class="a" style="left:536px;top:185px;width:32px;height:24px;background:#242539"></div><div class="a" style="left:536px;top:185px;width:1px;height:24px;background:rgba(130,140,175,0.2)"></div><div class="a" style="left:536px;top:209px;width:32px;height:24px;background:#242539"></div><div class="a" style="left:536px;top:209px;width:1px;height:24px;background:rgba(130,140,175,0.2)"></div><div class="a" style="left:536px;top:233px;width:32px;height:24px;background:#242539"></div><div class="a" style="left:568px;top:233px;width:31px;height:24px;background:#252e42"></div><div class="a" style="left:536px;top:233px;width:1px;height:24px;background:rgba(130,140,175,0.2)"></div><div class="a" style="left:568px;top:233px;width:1px;height:24px;background:rgba(130,140,175,0.2)"></div><div class="a" style="left:536px;top:257px;width:32px;height:24px;background:#242539"></div><div class="a" style="left:568px;top:257px;width:31px;height:24px;background:#252e42"></div><div class="a" style="left:599px;top:257px;width:32px;height:24px;background:#2a3749"></div><div class="a" style="left:536px;top:257px;width:1px;height:24px;background:rgba(130,140,175,0.2)"></div><div class="a" style="left:568px;top:257px;width:1px;height:24px;background:rgba(130,140,175,0.2)"></div><div class="a" style="left:599px;top:257px;width:1px;height:24px;background:rgba(130,140,175,0.2)"></div><div class="a" style="left:536px;top:281px;width:32px;height:24px;background:#242539"></div><div class="a" style="left:536px;top:281px;width:1px;height:24px;background:rgba(130,140,175,0.2)"></div><div class="a" style="left:536px;top:305px;width:1px;height:24px;background:rgba(130,140,175,0.2)"></div><div class="a" style="left:536px;top:329px;width:32px;height:24px;background:#242539"></div><div class="a" style="left:536px;top:329px;width:1px;height:24px;background:rgba(130,140,175,0.2)"></div><div class="a" style="left:536px;top:353px;width:32px;height:24px;background:#242539"></div><div class="a" style="left:536px;top:353px;width:1px;height:24px;background:rgba(130,140,175,0.2)"></div><div class="a" style="left:536px;top:377px;width:32px;height:24px;background:#242539"></div><div class="a" style="left:536px;top:377px;width:1px;height:24px;background:rgba(130,140,175,0.2)"></div><div class="a" style="left:536px;top:401px;width:32px;height:24px;background:#242539"></div><div class="a" style="left:536px;top:401px;width:1px;height:24px;background:rgba(130,140,175,0.2)"></div><div class="a" style="left:536px;top:425px;width:1px;height:24px;background:rgba(130,140,175,0.2)"></div><div class="a" style="left:536px;top:449px;width:32px;height:24px;background:#242539"></div><div class="a" style="left:536px;top:449px;width:1px;height:24px;background:rgba(130,140,175,0.2)"></div><div class="a" style="left:536px;top:473px;width:32px;height:24px;background:#242539"></div><div class="a" style="left:568px;top:473px;width:31px;height:24px;background:#252e42"></div><div class="a" style="left:536px;top:473px;width:1px;height:24px;background:rgba(130,140,175,0.2)"></div><div class="a" style="left:568px;top:473px;width:1px;height:24px;background:rgba(130,140,175,0.2)"></div><div class="a" style="left:536px;top:497px;width:32px;height:24px;background:#242539"></div><div class="a" style="left:568px;top:497px;width:31px;height:24px;background:#252e42"></div><div class="a" style="left:599px;top:497px;width:32px;height:24px;background:#2a3749"></div><div class="a" style="left:536px;top:497px;width:1px;height:24px;background:rgba(130,140,175,0.2)"></div><div class="a" style="left:568px;top:497px;width:1px;height:24px;background:rgba(130,140,175,0.2)"></div><div class="a" style="left:599px;top:497px;width:1px;height:24px;background:rgba(130,140,175,0.2)"></div><div class="a" style="left:536px;top:521px;width:32px;height:24px;background:#242539"></div><div class="a" style="left:568px;top:521px;width:31px;height:24px;background:#252e42"></div><div class="a" style="left:599px;top:521px;width:32px;height:24px;background:#2a3749"></div><div class="a" style="left:536px;top:521px;width:1px;height:24px;background:rgba(130,140,175,0.2)"></div><div class="a" style="left:568px;top:521px;width:1px;height:24px;background:rgba(130,140,175,0.2)"></div><div class="a" style="left:599px;top:521px;width:1px;height:24px;background:rgba(130,140,175,0.2)"></div><div class="a" style="left:536px;top:545px;width:32px;height:24px;background:#242539"></div><div class="a" style="left:568px;top:545px;width:31px;height:24px;background:#252e42"></div><div class="a" style="left:536px;top:545px;width:1px;height:24px;background:rgba(130,140,175,0.2)"></div><div class="a" style="left:568px;top:545px;width:1px;height:24px;background:rgba(130,140,175,0.2)"></div><div class="a" style="left:536px;top:569px;width:32px;height:24px;background:#242539"></div><div class="a" style="left:536px;top:569px;width:1px;height:24px;background:rgba(130,140,175,0.2)"></div><div class="a" style="left:536px;top:593px;width:1px;height:24px;background:rgba(130,140,175,0.2)"></div><div class="a" style="left:536px;top:617px;width:32px;height:24px;background:#242539"></div><div class="a" style="left:536px;top:617px;width:1px;height:24px;background:rgba(130,140,175,0.2)"></div><div class="a" style="left:536px;top:641px;width:32px;height:24px;background:#242539"></div><div class="a" style="left:568px;top:641px;width:31px;height:24px;background:#252e42"></div><div class="a" style="left:536px;top:641px;width:1px;height:24px;background:rgba(130,140,175,0.2)"></div><div class="a" style="left:568px;top:641px;width:1px;height:24px;background:rgba(130,140,175,0.2)"></div><div class="a" style="left:536px;top:665px;width:32px;height:24px;background:#242539"></div><div class="a" style="left:568px;top:665px;width:31px;height:24px;background:#252e42"></div><div class="a" style="left:599px;top:665px;width:32px;height:24px;background:#2a3749"></div><div class="a" style="left:536px;top:665px;width:1px;height:24px;background:rgba(130,140,175,0.2)"></div><div class="a" style="left:568px;top:665px;width:1px;height:24px;background:rgba(130,140,175,0.2)"></div><div class="a" style="left:599px;top:665px;width:1px;height:24px;background:rgba(130,140,175,0.2)"></div><div class="a" style="left:536px;top:689px;width:32px;height:24px;background:#242539"></div><div class="a" style="left:568px;top:689px;width:31px;height:24px;background:#252e42"></div><div class="a" style="left:599px;top:689px;width:32px;height:24px;background:#2a3749"></div><div class="a" style="left:536px;top:689px;width:1px;height:24px;background:rgba(130,140,175,0.2)"></div><div class="a" style="left:568px;top:689px;width:1px;height:24px;background:rgba(130,140,175,0.2)"></div><div class="a" style="left:599px;top:689px;width:1px;height:24px;background:rgba(130,140,175,0.2)"></div><div class="a" style="left:536px;top:713px;width:32px;height:24px;background:#242539"></div><div class="a" style="left:568px;top:713px;width:31px;height:24px;background:#252e42"></div><div class="a" style="left:536px;top:713px;width:1px;height:24px;background:rgba(130,140,175,0.2)"></div><div class="a" style="left:568px;top:713px;width:1px;height:24px;background:rgba(130,140,175,0.2)"></div><div class="a" style="left:536px;top:737px;width:32px;height:24px;background:#242539"></div><div class="a" style="left:536px;top:737px;width:1px;height:24px;background:rgba(130,140,175,0.2)"></div><div class="a" style="left:536px;top:761px;width:1px;height:24px;background:rgba(130,140,175,0.2)"></div><div class="a" style="left:536px;top:785px;width:32px;height:24px;background:#242539"></div><div class="a" style="left:536px;top:785px;width:1px;height:24px;background:rgba(130,140,175,0.2)"></div><div class="a" style="left:536px;top:809px;width:32px;height:24px;background:#242539"></div><div class="a" style="left:568px;top:809px;width:31px;height:24px;background:#252e42"></div><div class="a" style="left:536px;top:809px;width:1px;height:24px;background:rgba(130,140,175,0.2)"></div><div class="a" style="left:568px;top:809px;width:1px;height:24px;background:rgba(130,140,175,0.2)"></div><div class="a" style="left:536px;top:833px;width:32px;height:24px;background:#242539"></div><div class="a" style="left:568px;top:833px;width:31px;height:24px;background:#252e42"></div><div class="a" style="left:599px;top:833px;width:32px;height:24px;background:#2a3749"></div><div class="a" style="left:536px;top:833px;width:1px;height:24px;background:rgba(130,140,175,0.2)"></div><div class="a" style="left:568px;top:833px;width:1px;height:24px;background:rgba(130,140,175,0.2)"></div><div class="a" style="left:599px;top:833px;width:1px;height:24px;background:rgba(130,140,175,0.2)"></div><div class="a" style="left:536px;top:857px;width:32px;height:24px;background:#242539"></div><div class="a" style="left:568px;top:857px;width:31px;height:24px;background:#252e42"></div><div class="a" style="left:599px;top:857px;width:32px;height:24px;background:#2a3749"></div><div class="a" style="left:631px;top:857px;width:31px;height:24px;background:#293a47"></div><div class="a" style="left:536px;top:857px;width:1px;height:24px;background:rgba(130,140,175,0.2)"></div><div class="a" style="left:568px;top:857px;width:1px;height:24px;background:rgba(130,140,175,0.2)"></div><div class="a" style="left:599px;top:857px;width:1px;height:24px;background:rgba(130,140,175,0.2)"></div><div class="a" style="left:631px;top:857px;width:1px;height:24px;background:rgba(130,140,175,0.2)"></div><div class="a" style="left:536px;top:881px;width:32px;height:24px;background:#242539"></div><div class="a" style="left:568px;top:881px;width:31px;height:24px;background:#252e42"></div><div class="a" style="left:599px;top:881px;width:32px;height:24px;background:#2a3749"></div><div class="a" style="left:631px;top:881px;width:31px;height:24px;background:#293a47"></div><div class="a" style="left:536px;top:881px;width:1px;height:24px;background:rgba(130,140,175,0.2)"></div><div class="a" style="left:568px;top:881px;width:1px;height:24px;background:rgba(130,140,175,0.2)"></div><div class="a" style="left:599px;top:881px;width:1px;height:24px;background:rgba(130,140,175,0.2)"></div><div class="a" style="left:631px;top:881px;width:1px;height:24px;background:rgba(130,140,175,0.2)"></div><div class="a" style="left:536px;top:905px;width:32px;height:24px;background:#242539"></div><div class="a" style="left:568px;top:905px;width:31px;height:24px;background:#252e42"></div><div class="a" style="left:599px;top:905px;width:32px;height:24px;background:#2a3749"></div><div class="a" style="left:536px;top:905px;width:1px;height:24px;background:rgba(130,140,175,0.2)"></div><div class="a" style="left:568px;top:905px;width:1px;height:24px;background:rgba(130,140,175,0.2)"></div><div class="a" style="left:599px;top:905px;width:1px;height:24px;background:rgba(130,140,175,0.2)"></div><div class="a" style="left:536px;top:929px;width:32px;height:24px;background:#242539"></div><div class="a" style="left:568px;top:929px;width:31px;height:24px;background:#252e42"></div><div class="a" style="left:536px;top:929px;width:1px;height:24px;background:rgba(130,140,175,0.2)"></div><div class="a" style="left:568px;top:929px;width:1px;height:24px;background:rgba(130,140,175,0.2)"></div><div class="a" style="left:536px;top:953px;width:32px;height:24px;background:#242539"></div><div class="a" style="left:536px;top:953px;width:1px;height:24px;background:rgba(130,140,175,0.2)"></div><div class="a" style="left:537px;top:665px;width:908px;height:24px;background:rgba(255,255,255,0.035)"></div><div class="ln" style="top:114px;">1</div><div class="code" style="top:114px"><span class="s">"use strict"</span><span class="sc">;</span></div><div class="ln" style="top:138px;">2</div><div class="code" style="top:138px"><span class="b0">(</span><span class="kw">function</span> <span class="b1">(</span><span class="b1">)</span> <span class="b1">{</span></div><div class="ln" style="top:162px;">3</div><div class="code" style="top:162px">   <span class="cm">// Change title</span></div><div class="ln" style="top:186px;">4</div><div class="code" style="top:186px">   <span class="kw">const</span> <span class="v">title</span> <span class="op">=</span> <span class="doc">document</span><span class="dot">.</span><span class="fn">querySelector</span><span class="b2">(</span><span class="s">"title"</span><span class="b2">)</span><span class="sc">;</span></div><div class="ln" style="top:210px;">5</div><div class="code" style="top:210px">   <span class="kw">if</span> <span class="b2">(</span><span class="v">title</span><span class="b2">)</span> <span class="b2">{</span></div><div class="ln" style="top:234px;">6</div><div class="code" style="top:234px">      <span class="v">title</span><span class="dot">.</span><span class="pr">innerText</span> <span class="op">=</span></div><div class="ln" style="top:258px;">7</div><div class="code" style="top:258px">         <span class="s">"eComArts - Multipurpose eCommerce Tailwindcss Template"</span><span class="sc">;</span></div><div class="ln" style="top:282px;">8</div><div class="code" style="top:282px">   <span class="b2">}</span></div><div class="ln" style="top:306px;">9</div><div class="code" style="top:306px"></div><div class="ln" style="top:330px;">10</div><div class="code" style="top:330px">   <span class="cm">// search modal</span></div><div class="ln" style="top:354px;">11</div><div class="code" style="top:354px">   <span class="kw">const</span> <span class="v">openModal</span> <span class="op">=</span> <span class="doc">document</span><span class="dot">.</span><span class="fn">getElementById</span><span class="b2">(</span><span class="s">"open-search-modal"</span><span class="b2">)</span><span class="sc">;</span></div><div class="ln" style="top:378px;">12</div><div class="code" style="top:378px">   <span class="kw">const</span> <span class="v">closeModal</span> <span class="op">=</span> <span class="doc">document</span><span class="dot">.</span><span class="fn">getElementById</span><span class="b2">(</span><span class="s">"close-search-modal"</span><span class="b2">)</span><span class="sc">;</span></div><div class="ln" style="top:402px;">13</div><div class="code" style="top:402px">   <span class="kw">const</span> <span class="v">modal</span> <span class="op">=</span> <span class="doc">document</span><span class="dot">.</span><span class="fn">getElementById</span><span class="b2">(</span><span class="s">"search-modal"</span><span class="b2">)</span><span class="sc">;</span></div><div class="ln" style="top:426px;">14</div><div class="code" style="top:426px"></div><div class="ln" style="top:450px;">15</div><div class="code" style="top:450px">   <span class="kw">if</span> <span class="b2">(</span><span class="v">openModal</span> <span class="op">&amp;&amp;</span> <span class="v">modal</span><span class="b2">)</span> <span class="b2">{</span></div><div class="ln" style="top:474px;">16</div><div class="code" style="top:474px">      <span class="v">openModal</span><span class="dot">.</span><span class="fn">addEventListener</span><span class="b0">(</span><span class="s">"click"</span><span class="sc">,</span> <span class="b1">(</span><span class="b1">)</span> <span style="display:inline-block;width:21px;height:24px;vertical-align:top;position:relative"><svg style="left:0;top:0" width="24" height="24" viewBox="0 0 24 24"><path d="M1.3 8.5H20M1.3 12.5H20M15.6 4.3L21.9 10.5 15.6 16.7" stroke="#3fa2f0" stroke-width="1.3" fill="none" stroke-linecap="round" stroke-linejoin="round"/></svg></span> <span class="b1">{</span></div><div class="ln" style="top:498px;">17</div><div class="code" style="top:498px">         <span class="v">modal</span><span class="dot">.</span><span class="pr">classList</span><span class="dot">.</span><span class="fn">remove</span><span class="b2">(</span><span class="s">"hidden"</span><span class="b2">)</span><span class="sc">;</span></div><div class="ln" style="top:522px;">18</div><div class="code" style="top:522px">         <span class="v">modal</span><span class="dot">.</span><span class="pr">classList</span><span class="dot">.</span><span class="fn">add</span><span class="b2">(</span><span class="s">"flex"</span><span class="b2">)</span><span class="sc">;</span></div><div class="ln" style="top:546px;">19</div><div class="code" style="top:546px">      <span class="b1">}</span><span class="b0">)</span><span class="sc">;</span></div><div class="ln" style="top:570px;">20</div><div class="code" style="top:570px">   <span class="b2">}</span></div><div class="ln" style="top:594px;">21</div><div class="code" style="top:594px"></div><div class="ln" style="top:618px;">22</div><div class="code" style="top:618px">   <span class="kw">if</span> <span class="b2">(</span><span class="v">closeModal</span> <span class="op">&amp;&amp;</span> <span class="v">modal</span><span class="b2">)</span> <span class="b2">{</span></div><div class="ln" style="top:642px;">23</div><div class="code" style="top:642px">      <span class="v">closeModal</span><span class="dot">.</span><span class="fn">addEventListener</span><span class="b0">(</span><span class="s">"click"</span><span class="sc">,</span> <span class="b1">(</span><span class="b1">)</span> <span style="display:inline-block;width:21px;height:24px;vertical-align:top;position:relative"><svg style="left:0;top:0" width="24" height="24" viewBox="0 0 24 24"><path d="M1.3 8.5H20M1.3 12.5H20M15.6 4.3L21.9 10.5 15.6 16.7" stroke="#3fa2f0" stroke-width="1.3" fill="none" stroke-linecap="round" stroke-linejoin="round"/></svg></span> <span class="b1">{</span></div><div class="ln" style="top:666px;color:#f2d31b">24</div><div class="code" style="top:666px">         <span class="v">modal</span><span class="dot">.</span><span class="pr">classList</span><span class="dot">.</span><span class="fn">add</span><span class="b2">(</span><span class="s">"hidden"</span><span class="b2">)</span><span class="sc">;</span></div><div class="ln" style="top:690px;">25</div><div class="code" style="top:690px">         <span class="v">modal</span><span class="dot">.</span><span class="pr">classList</span><span class="dot">.</span><span class="fn">remove</span><span class="b2">(</span><span class="s">"flex"</span><span class="b2">)</span><span class="sc">;</span></div><div class="ln" style="top:714px;">26</div><div class="code" style="top:714px">      <span class="b1">}</span><span class="b0">)</span><span class="sc">;</span></div><div class="ln" style="top:738px;">27</div><div class="code" style="top:738px">   <span class="b2">}</span></div><div class="ln" style="top:762px;">28</div><div class="code" style="top:762px"></div><div class="ln" style="top:786px;">29</div><div class="code" style="top:786px">   <span class="kw">if</span> <span class="b2">(</span><span class="v">modal</span><span class="b2">)</span> <span class="b2">{</span></div><div class="ln" style="top:810px;">30</div><div class="code" style="top:810px">      <span class="v">modal</span><span class="dot">.</span><span class="fn">addEventListener</span><span class="b0">(</span><span class="s">"click"</span><span class="sc">,</span> <span class="b1">(</span><span class="par">event</span><span class="b1">)</span> <span style="display:inline-block;width:21px;height:24px;vertical-align:top;position:relative"><svg style="left:0;top:0" width="24" height="24" viewBox="0 0 24 24"><path d="M1.3 8.5H20M1.3 12.5H20M15.6 4.3L21.9 10.5 15.6 16.7" stroke="#3fa2f0" stroke-width="1.3" fill="none" stroke-linecap="round" stroke-linejoin="round"/></svg></span> <span class="b1">{</span></div><div class="ln" style="top:834px;">31</div><div class="code" style="top:834px">         <span class="kw">if</span> <span class="b2">(</span><span class="par">event</span><span class="dot">.</span><span class="v">target</span> <span style="display:inline-block;width:31.5px;height:24px;vertical-align:top;position:relative"><svg style="left:0;top:0" width="32" height="24" viewBox="0 0 32 24"><path d="M1.3 6.5H30.5M1.3 10.5H30.5M1.3 14.5H30.5" stroke="#8d91ee" stroke-width="1.2" stroke-linecap="round"/></svg></span> <span class="v">modal</span><span class="b2">)</span> <span class="b2">{</span></div><div class="ln" style="top:858px;">32</div><div class="code" style="top:858px">            <span class="v">modal</span><span class="dot">.</span><span class="pr">classList</span><span class="dot">.</span><span class="fn">add</span><span class="b0">(</span><span class="s">"hidden"</span><span class="b0">)</span><span class="sc">;</span></div><div class="ln" style="top:882px;">33</div><div class="code" style="top:882px">            <span class="v">modal</span><span class="dot">.</span><span class="pr">classList</span><span class="dot">.</span><span class="fn">remove</span><span class="b0">(</span><span class="s">"flex"</span><span class="b0">)</span><span class="sc">;</span></div><div class="ln" style="top:906px;">34</div><div class="code" style="top:906px">         <span class="b2">}</span></div><div class="ln" style="top:930px;">35</div><div class="code" style="top:930px">      <span class="b1">}</span><span class="b0">)</span><span class="sc">;</span></div><div class="ln" style="top:954px;">36</div><div class="code" style="top:954px">   <span class="b2">}</span></div><div class="code" style="left:1013px;top:666px;color:#515866;-webkit-text-stroke:0">Hozaifa Bin Masud, 3 weeks ago · New project</div><div class="a" style="left:599px;top:664px;width:464px;height:1px;background:#aba436"></div><div class="a" style="left:599px;top:664px;width:1px;height:50px;background:#aba436"></div><div class="a" style="left:599px;top:713px;width:11px;height:1px;background:#aba436"></div></body></html>
